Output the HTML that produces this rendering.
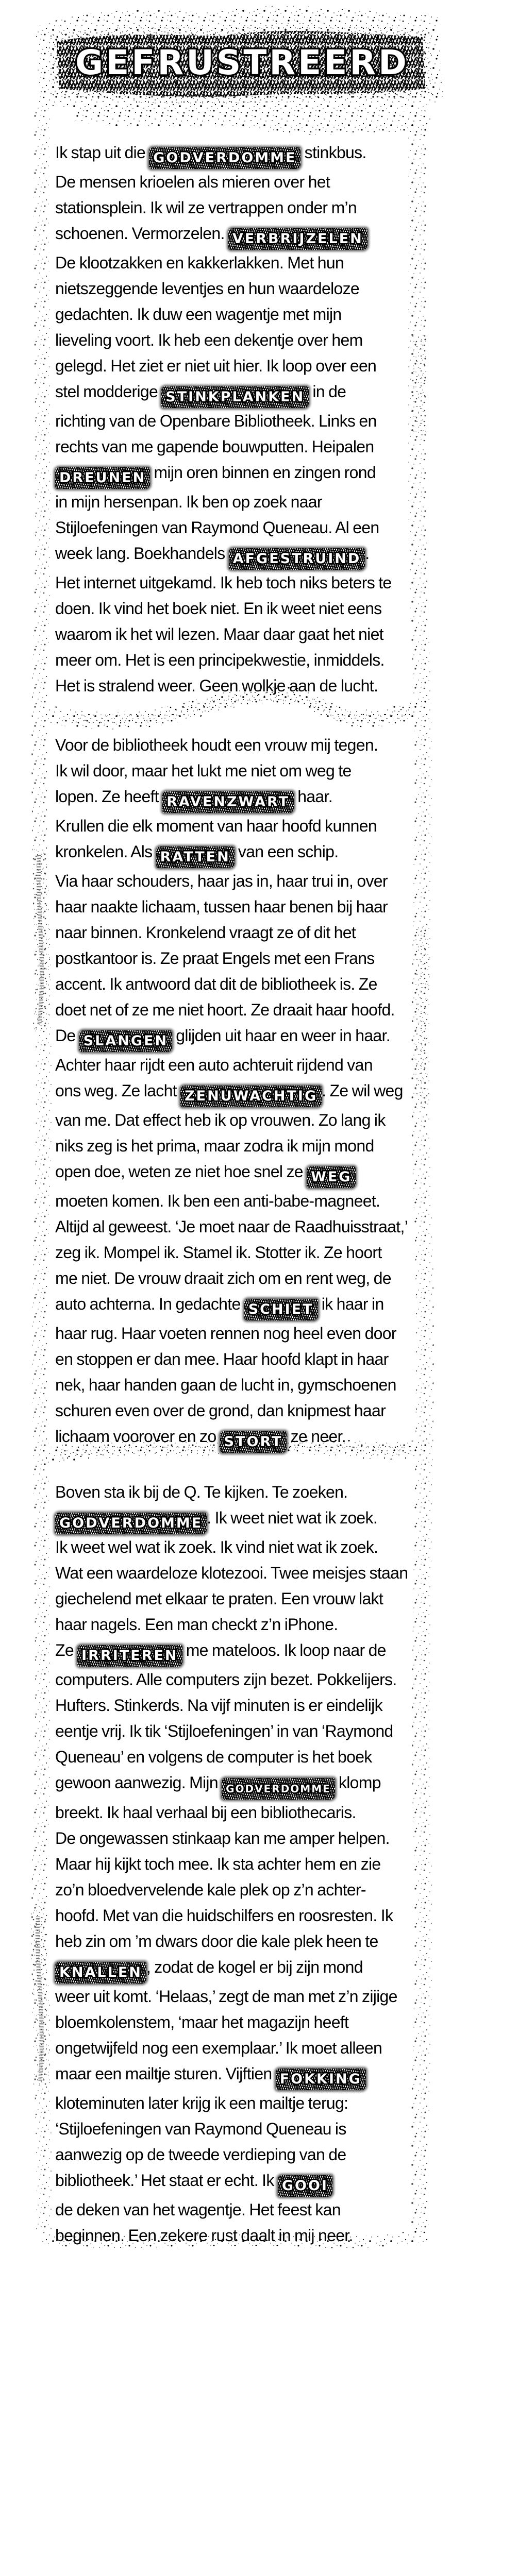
<!DOCTYPE html>
<html>
<head>
<meta charset="utf-8">
<style>
html{width:1005px;height:5197px;overflow:hidden;}
html,body{margin:0;padding:0;background:#fff;}
body{width:1005px;height:5197px;position:relative;overflow:hidden;font-family:"Liberation Sans",sans-serif;}
svg.bg{position:absolute;left:0;top:0;}
.p{position:absolute;left:107px;font-size:32px;line-height:50px;color:#000;white-space:nowrap;letter-spacing:-0.7px;word-spacing:-1px;}
.g{display:inline-block;font-family:"DejaVu Sans",sans-serif;font-weight:bold;font-size:27px;line-height:42px;height:42px;padding:0 8px;color:#fff;letter-spacing:3px;vertical-align:-8px;-webkit-text-stroke:5px #000;paint-order:stroke fill;
background:repeating-linear-gradient(72deg,#000 0 2px,transparent 2px 4px),repeating-linear-gradient(-62deg,#000 0 1.5px,transparent 1.5px 4px),repeating-linear-gradient(10deg,#222 0 1px,#fff 1px 4px);border-radius:8px 4px 9px 5px;box-shadow:0 0 4px 3px rgba(0,0,0,.6);}
.title{position:absolute;left:120px;top:82px;width:700px;text-align:center;font-family:"DejaVu Sans",sans-serif;font-weight:bold;font-size:66px;line-height:80px;color:#fff;letter-spacing:5px;-webkit-text-stroke:7px #000;paint-order:stroke fill;white-space:nowrap;}
</style>
</head>
<body>
<svg class="bg" width="1005" height="5197" viewBox="0 0 1005 5197" xmlns="http://www.w3.org/2000/svg">
<defs>
<pattern id="spk" width="41" height="37" patternUnits="userSpaceOnUse">
<circle cx="3" cy="4" r="1.3"/><circle cx="14" cy="9" r="0.8"/><circle cx="27" cy="3" r="1.6"/><circle cx="36" cy="12" r="0.9"/>
<circle cx="8" cy="18" r="1.1"/><circle cx="21" cy="21" r="1.8"/><circle cx="33" cy="25" r="0.7"/><circle cx="5" cy="30" r="1.5"/>
<circle cx="17" cy="33" r="0.9"/><circle cx="29" cy="34" r="1.2"/><circle cx="39" cy="30" r="0.8"/><circle cx="12" cy="26" r="0.6"/>
<circle cx="24" cy="13" r="0.7"/><circle cx="38" cy="2" r="0.6"/><circle cx="1" cy="22" r="0.7"/>
</pattern>
<pattern id="spk2" width="23" height="29" patternUnits="userSpaceOnUse">
<circle cx="4" cy="6" r="1"/><circle cx="15" cy="3" r="0.7"/><circle cx="19" cy="14" r="1.3"/><circle cx="7" cy="17" r="0.8"/>
<circle cx="12" cy="24" r="1.1"/><circle cx="2" cy="26" r="0.6"/><circle cx="21" cy="25" r="0.7"/><rect x="10" y="9" width="3" height="1.2" transform="rotate(30 11 10)"/>
</pattern>
<pattern id="hatch" width="26" height="22" patternUnits="userSpaceOnUse">
<rect width="26" height="22" fill="#fff"/>
<g stroke="#000" stroke-width="2.4" fill="none">
<path d="M0 20 L8 0 M6 22 L14 2 M13 22 L20 4 M19 22 L26 3 M-3 12 L3 -2 M23 24 L29 10"/>
<path d="M0 3 L9 20 M10 1 L18 19 M17 0 L25 17 M3 0 L13 22" stroke-width="1.8"/>
<path d="M0 11 L26 8 M0 17 L26 15" stroke-width="1.2"/>
</g>
</pattern>
</defs>

<!-- Title grunge -->
<g>
<path d="M95 70 C200 35 320 45 420 50 C520 25 640 40 825 55 L835 175 C720 205 600 190 480 200 C350 210 220 195 100 180 Z" fill="url(#spk)" stroke="url(#spk)" stroke-width="50"/>
<path d="M110 80 C220 62 330 68 430 70 C540 52 660 62 820 72 L825 172 C700 188 580 178 470 186 C350 192 220 182 115 172 Z" fill="url(#hatch)"/>
<path d="M110 80 C220 62 330 68 430 70 C540 52 660 62 820 72 L825 172 C700 188 580 178 470 186 C350 192 220 182 115 172 Z" fill="url(#spk2)" stroke="url(#spk2)" stroke-width="30"/>
<path d="M150 215 C300 245 420 205 520 235 C640 255 760 220 830 245" fill="none" stroke="url(#spk)" stroke-width="40"/>
</g>

<g opacity="0.75">
<!-- Left border -->
<path d="M82 200 C75 600 92 900 78 1300 C70 1700 95 2000 80 2400 C72 2800 92 3200 78 3600 C70 3900 90 4100 85 4330" fill="none" stroke="url(#spk)" stroke-width="30"/>
<path d="M80 1650 C70 1750 95 1850 78 2000 M75 3700 C68 3800 92 3900 80 4050" fill="none" stroke="url(#spk2)" stroke-width="30"/>
<path d="M76 1660 C70 1760 90 1860 76 1990 M74 3720 C68 3820 88 3900 78 4040" fill="none" stroke="#000" stroke-width="8" stroke-dasharray="1 2" opacity=".8"/>
<!-- Right border -->
<path d="M808 200 C815 600 800 900 818 1300 C828 1700 805 2000 822 2400 C832 2800 808 3200 820 3600 C826 3900 810 4100 815 4330" fill="none" stroke="url(#spk)" stroke-width="34"/>
<path d="M815 1800 C830 1900 805 2000 822 2150 M812 650 C820 700 805 780 815 850" fill="none" stroke="url(#spk2)" stroke-width="26"/>
</g>

<!-- Divider 1 -->
<path d="M90 1385 C200 1410 300 1400 400 1370 C480 1345 560 1335 620 1370 C680 1405 740 1400 830 1370" fill="none" stroke="url(#spk)" stroke-width="34"/>
<path d="M140 1392 C250 1405 330 1390 410 1368 C480 1348 560 1342 620 1372 C680 1400 740 1398 800 1380" fill="none" stroke="url(#spk2)" stroke-width="18"/>
<!-- Divider 2 -->
<path d="M80 2830 C200 2800 320 2820 450 2805 C580 2790 700 2830 830 2810" fill="none" stroke="url(#spk)" stroke-width="34"/>
<path d="M120 2825 C240 2805 340 2820 450 2808 C580 2795 700 2825 800 2812" fill="none" stroke="url(#spk2)" stroke-width="16"/>
<!-- Bottom -->
<path d="M80 4345 C250 4360 450 4340 600 4350 C700 4356 780 4345 830 4340" fill="none" stroke="url(#spk)" stroke-width="24"/>
</svg>

<div class="title">GEFRUSTREERD</div>

<div class="p" style="top:271px">Ik stap uit die <span class="g">GODVERDOMME</span> stinkbus.<br>
De mensen krioelen als mieren over het<br>
stationsplein. Ik wil ze vertrappen onder m’n<br>
schoenen. Vermorzelen. <span class="g">VERBRIJZELEN</span><br>
De klootzakken en kakkerlakken. Met hun<br>
nietszeggende leventjes en hun waardeloze<br>
gedachten. Ik duw een wagentje met mijn<br>
lieveling voort. Ik heb een dekentje over hem<br>
gelegd. Het ziet er niet uit hier. Ik loop over een<br>
stel modderige <span class="g">STINKPLANKEN</span> in de<br>
richting van de Openbare Bibliotheek. Links en<br>
rechts van me gapende bouwputten. Heipalen<br>
<span class="g">DREUNEN</span> mijn oren binnen en zingen rond<br>
in mijn hersenpan. Ik ben op zoek naar<br>
Stijloefeningen van Raymond Queneau. Al een<br>
week lang. Boekhandels <span class="g">AFGESTRUIND</span>.<br>
Het internet uitgekamd. Ik heb toch niks beters te<br>
doen. Ik vind het boek niet. En ik weet niet eens<br>
waarom ik het wil lezen. Maar daar gaat het niet<br>
meer om. Het is een principekwestie, inmiddels.<br>
Het is stralend weer. Geen wolkje aan de lucht.</div>

<div class="p" style="top:1421px">Voor de bibliotheek houdt een vrouw mij tegen.<br>
Ik wil door, maar het lukt me niet om weg te<br>
lopen. Ze heeft <span class="g">RAVENZWART</span> haar.<br>
Krullen die elk moment van haar hoofd kunnen<br>
kronkelen. Als <span class="g">RATTEN</span> van een schip.<br>
Via haar schouders, haar jas in, haar trui in, over<br>
haar naakte lichaam, tussen haar benen bij haar<br>
naar binnen. Kronkelend vraagt ze of dit het<br>
postkantoor is. Ze praat Engels met een Frans<br>
accent. Ik antwoord dat dit de bibliotheek is. Ze<br>
doet net of ze me niet hoort. Ze draait haar hoofd.<br>
De <span class="g">SLANGEN</span> glijden uit haar en weer in haar.<br>
Achter haar rijdt een auto achteruit rijdend van<br>
ons weg. Ze lacht <span class="g">ZENUWACHTIG</span>. Ze wil weg<br>
van me. Dat effect heb ik op vrouwen. Zo lang ik<br>
niks zeg is het prima, maar zodra ik mijn mond<br>
open doe, weten ze niet hoe snel ze <span class="g">WEG</span><br>
moeten komen. Ik ben een anti-babe-magneet.<br>
Altijd al geweest. ‘Je moet naar de Raadhuisstraat,’<br>
zeg ik. Mompel ik. Stamel ik. Stotter ik. Ze hoort<br>
me niet. De vrouw draait zich om en rent weg, de<br>
auto achterna. In gedachte <span class="g">SCHIET</span> ik haar in<br>
haar rug. Haar voeten rennen nog heel even door<br>
en stoppen er dan mee. Haar hoofd klapt in haar<br>
nek, haar handen gaan de lucht in, gymschoenen<br>
schuren even over de grond, dan knipmest haar<br>
lichaam voorover en zo <span class="g">STORT</span> ze neer.</div>

<div class="p" style="top:2871px">Boven sta ik bij de Q. Te kijken. Te zoeken.<br>
<span class="g">GODVERDOMME</span>. Ik weet niet wat ik zoek.<br>
Ik weet wel wat ik zoek. Ik vind niet wat ik zoek.<br>
Wat een waardeloze klotezooi. Twee meisjes staan<br>
giechelend met elkaar te praten. Een vrouw lakt<br>
haar nagels. Een man checkt z’n iPhone.<br>
Ze <span class="g">IRRITEREN</span> me mateloos. Ik loop naar de<br>
computers. Alle computers zijn bezet. Pokkelijers.<br>
Hufters. Stinkerds. Na vijf minuten is er eindelijk<br>
eentje vrij. Ik tik ‘Stijloefeningen’ in van ‘Raymond<br>
Queneau’ en volgens de computer is het boek<br>
gewoon aanwezig. Mijn <span class="g" style="font-size:20px;letter-spacing:2px">GODVERDOMME</span> klomp<br>
breekt. Ik haal verhaal bij een bibliothecaris.<br>
De ongewassen stinkaap kan me amper helpen.<br>
Maar hij kijkt toch mee. Ik sta achter hem en zie<br>
zo’n bloedvervelende kale plek op z’n achter-<br>
hoofd. Met van die huidschilfers en roosresten. Ik<br>
heb zin om ’m dwars door die kale plek heen te<br>
<span class="g">KNALLEN</span>, zodat de kogel er bij zijn mond<br>
weer uit komt. ‘Helaas,’ zegt de man met z’n zijige<br>
bloemkolenstem, ‘maar het magazijn heeft<br>
ongetwijfeld nog een exemplaar.’ Ik moet alleen<br>
maar een mailtje sturen. Vijftien <span class="g">FOKKING</span><br>
kloteminuten later krijg ik een mailtje terug:<br>
‘Stijloefeningen van Raymond Queneau is<br>
aanwezig op de tweede verdieping van de<br>
bibliotheek.’ Het staat er echt. Ik <span class="g">GOOI</span><br>
de deken van het wagentje. Het feest kan<br>
beginnen. Een zekere rust daalt in mij neer.</div>
</body>
</html>
